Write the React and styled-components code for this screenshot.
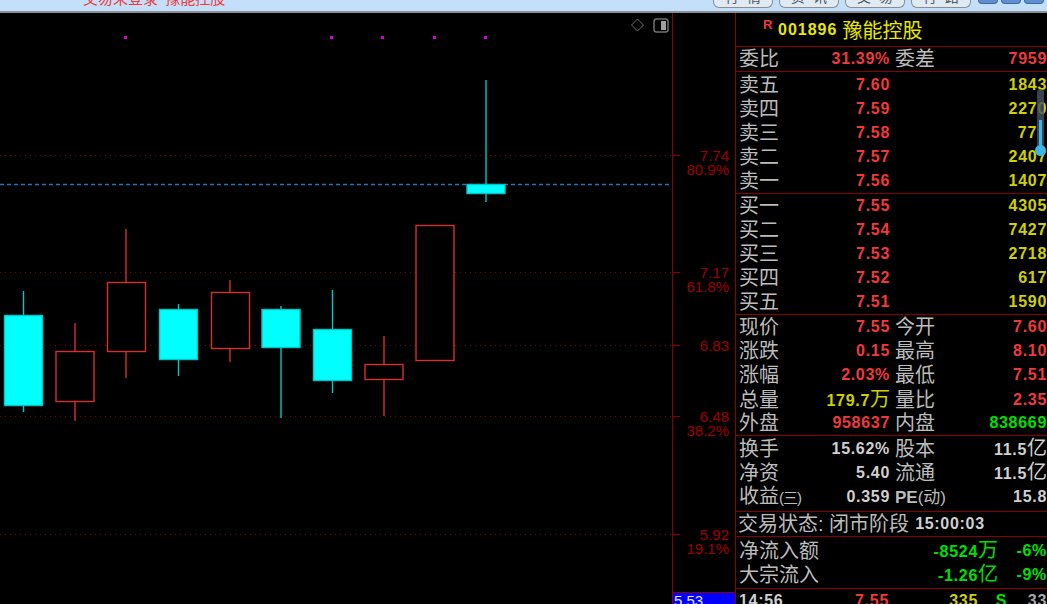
import React from 'react';
import styled, { createGlobalStyle } from 'styled-components';

const GlobalStyle = createGlobalStyle`
  html, body { margin: 0; padding: 0; background: #000; overflow: hidden; }
  body { font-family: "Liberation Sans", "Noto Sans CJK SC", sans-serif; }
`;

const candles = [
  { mid: 23.5, left: 4.5, top: 291, bottom: 412, y1: 315, y2: 405, up: false },
  { mid: 75, left: 56, top: 323, bottom: 421, y1: 351, y2: 401, up: true },
  { mid: 126, left: 107.5, top: 229, bottom: 378, y1: 282, y2: 351, up: true },
  { mid: 178.5, left: 159.5, top: 304, bottom: 376, y1: 309, y2: 359, up: false },
  { mid: 230, left: 211.5, top: 280, bottom: 362, y1: 292, y2: 348, up: true },
  { mid: 281, left: 262, top: 306, bottom: 418, y1: 309, y2: 347, up: false },
  { mid: 332.5, left: 313.5, top: 290, bottom: 393, y1: 329, y2: 380, up: false },
  { mid: 384, left: 365, top: 336, bottom: 416, y1: 364, y2: 379, up: true },
  { mid: 435, left: 416, top: 225, bottom: 360, y1: 225, y2: 360, up: true },
  { mid: 486, left: 467, top: 80, bottom: 202, y1: 184, y2: 193, up: false },
];

const gridLines = [155, 272, 345, 416, 534];
const marks = [125.5, 331.5, 382.5, 434.5, 485.5];

const axisLabels = [
  { top: 149, price: '7.74', pct: '80.9%' },
  { top: 266, price: '7.17', pct: '61.8%' },
  { top: 339, price: '6.83' },
  { top: 410, price: '6.48', pct: '38.2%' },
  { top: 528, price: '5.92', pct: '19.1%' },
];

const asks = [
  ['卖五', '7.60', '1843'],
  ['卖四', '7.59', '2270'],
  ['卖三', '7.58', '77', 10],
  ['卖二', '7.57', '2407'],
  ['卖一', '7.56', '1407'],
];
const bids = [
  ['买一', '7.55', '4305'],
  ['买二', '7.54', '7427'],
  ['买三', '7.53', '2718'],
  ['买四', '7.52', '617'],
  ['买五', '7.51', '1590'],
];

const Page = styled.div`
  width: 1047px;
  height: 604px;
  display: flex;
  flex-direction: column;
  overflow: hidden;
  background: #000;
`;

const TopBar = styled.div`
  height: 11px;
  flex: none;
  display: flex;
  justify-content: space-between;
  align-items: flex-start;
  background: #c3dffa;
  border-bottom: 2px solid #8b9097;
  overflow: hidden;
`;

const Notice = styled.div`
  margin: -9px 0 0 83px;
  font-size: 15px;
  line-height: 15px;
  word-spacing: 3px;
  color: #f03a3a;
  white-space: nowrap;
`;

const TopTabs = styled.div`
  display: flex;
  align-items: flex-start;
  gap: 6px;
  margin-right: 3px;
`;

const TopTab = styled.div`
  width: 60px;
  height: 8px;
  box-sizing: border-box;
  border: 1px solid #8d8d8d;
  border-top: none;
  border-radius: 0 0 6px 6px;
  background: #dfeaf5;
  overflow: hidden;
`;

const TabText = styled.div`
  margin-top: -10px;
  color: #555;
  font-size: 14px;
  line-height: 14px;
  letter-spacing: 8px;
  text-align: center;
  padding-left: 8px;
`;

const TopKeys = styled.div`
  display: flex;
  gap: 3px;
  margin-left: 1px;
`;

const TopKey = styled.div`
  width: 20px;
  height: 4px;
  box-sizing: border-box;
  background: #5f8fd0;
  border: 1px solid #3f6aa8;
  border-top: none;
  border-radius: 0 0 5px 5px;
`;

const Body = styled.div`
  flex: 1;
  display: flex;
  min-height: 0;
`;

const Chart = styled.div`
  position: relative;
  width: 736px;
  flex: none;
  border-right: 1px solid #8a0000;
  box-sizing: border-box;
`;

const ChartSvg = styled.svg`
  position: absolute;
  left: 0;
  top: -13px;
`;

const AxisLabel = styled.div`
  position: absolute;
  top: ${(p) => p.$top - 13}px;
  right: 6px;
  width: 50px;
  text-align: right;
  font-size: 15px;
  line-height: 14px;
  color: #a00000;
`;

const AxisPrice = styled.div`
  height: 14px;
`;

const CursorTag = styled.div`
  position: absolute;
  left: 673px;
  right: 0;
  bottom: 0;
  height: 11px;
  padding-left: 1px;
  background: #0000ff;
  border-top: 1px solid #8a0000;
  color: #e4e4ff;
  font-size: 15px;
  line-height: 15px;
  overflow: hidden;
`;

const Panel = styled.div`
  position: relative;
  flex: 1;
  min-width: 0;
  overflow: hidden;
  color: #bcbcbc;
  font-size: 20px;
`;

const Title = styled.div`
  height: 33px;
  display: flex;
  align-items: center;
  padding-left: 27px;
  color: #e8e800;
  border-bottom: 1px solid #8a0000;
`;

const TitleMark = styled.span`
  align-self: flex-start;
  margin-top: 5px;
  width: 15px;
  color: #f03a3a;
  font-size: 13px;
  font-weight: 700;
  line-height: 14px;
`;

const TitleCode = styled.span`
  font-size: 16px;
  font-weight: 700;
  letter-spacing: 1px;
`;

const TitleName = styled.span`
  margin-left: 5px;
  font-size: 20px;
`;

const Section = styled.div`
  border-bottom: 1px solid #8a0000;
  padding: ${(p) => p.$pad || '0'};
`;

const QuoteRow = styled.div`
  display: grid;
  grid-template-columns: 42px 109px 44px 1fr;
  height: 24px;
  align-items: center;
  padding-left: 3px;
`;

const BookRow = styled.div`
  display: grid;
  grid-template-columns: 42px 109px 1fr;
  height: 24px;
  align-items: center;
  padding-left: 3px;
`;

const Label = styled.span`
  font-size: 20px;
  line-height: 24px;
  color: #bcbcbc;
  white-space: nowrap;
  margin-left: ${(p) => p.$ml || 0}px;
`;

const Tight = styled.span`
  font-size: 15px;
  letter-spacing: -1px;
`;

const PeLabel = styled.span`
  font-size: 17px;
  font-weight: ${(p) => (p.$bold ? 700 : 400)};
`;

const Num = styled.span`
  text-align: ${(p) => (p.$left ? 'left' : 'right')};
  padding-right: ${(p) => p.$pr || 0}px;
  font-size: 16px;
  font-weight: 700;
  letter-spacing: 0.7px;
  line-height: 24px;
  white-space: nowrap;
  color: ${(p) => p.$c || '#f03a3a'};
`;

const Cjk = styled.span`
  font-size: 20px;
  font-weight: 400;
  letter-spacing: 0;
`;

const StatusRow = styled.div`
  height: 24px;
  display: flex;
  align-items: center;
  padding-left: 2px;
  gap: 6px;
  border-bottom: 1px solid #8a0000;
`;

const FlowRow = styled.div`
  display: grid;
  grid-template-columns: 100px 159px 1fr;
  height: 24px;
  align-items: center;
  padding-left: 3px;
`;

const TickRow = styled.div`
  display: grid;
  grid-template-columns: 70px 80px 89px 29px 1fr;
  height: 24px;
  align-items: center;
  padding-left: 3px;
`;

const Slider = styled.div`
  position: absolute;
  right: 3px;
  top: 76px;
  width: 7px;
  height: 63px;
  border-radius: 4px;
  background: rgba(70, 85, 100, 0.8);
`;

const SliderFill = styled.div`
  position: absolute;
  left: 2px;
  top: 31px;
  bottom: 3px;
  width: 3px;
  background: #38b6e8;
`;

const SliderKnob = styled.div`
  position: absolute;
  left: -2px;
  bottom: -4px;
  width: 11px;
  height: 11px;
  border-radius: 50%;
  background: #38b6e8;
`;

const G = '#00e000';
const Y = '#d0d000';
const W = '#d0d0d0';

function QuoteLine({ a, b, c, d, cb, cd }) {
  return (
    <QuoteRow>
      <Label>{a}</Label>
      <Num $c={cb}>{b}</Num>
      <Label $ml={5}>{c}</Label>
      <Num $c={cd}>{d}</Num>
    </QuoteRow>
  );
}

function BookLine({ row }) {
  return (
    <BookRow>
      <Label>{row[0]}</Label>
      <Num>{row[1]}</Num>
      <Num $c={Y} $pr={row[3]}>{row[2]}</Num>
    </BookRow>
  );
}

export default function App() {
  return (
    <Page>
      <GlobalStyle />
      <TopBar>
        <Notice>交易未登录 豫能控股</Notice>
        <TopTabs>
          <TopTab><TabText>行情</TabText></TopTab>
          <TopTab><TabText>资讯</TabText></TopTab>
          <TopTab><TabText>交易</TabText></TopTab>
          <TopTab><TabText>行路</TabText></TopTab>
          <TopKeys>
            <TopKey />
            <TopKey />
            <TopKey />
          </TopKeys>
        </TopTabs>
      </TopBar>
      <Body>
        <Chart>
          <ChartSvg width="735" height="604" viewBox="0 0 735 604">
            {gridLines.map((y) => (
              <g key={y}>
                <line x1="0" x2="673" y1={y + 0.5} y2={y + 0.5} stroke="#8a0000" strokeDasharray="1 4" />
                <line x1="673" x2="680" y1={y + 0.5} y2={y + 0.5} stroke="#8a0000" />
              </g>
            ))}
            <line x1="0" x2="673" y1="184.5" y2="184.5" stroke="#2a73b8" strokeWidth="1.3" strokeDasharray="4 3" />
            <line x1="672.5" x2="672.5" y1="13" y2="604" stroke="#8a0000" />
            {marks.map((x) => (
              <rect key={x} x={x - 1.5} y="36" width="3" height="3" fill="#d800d8" />
            ))}
            {candles.map((c) => {
              const col = c.up ? '#d43030' : '#00c8c8';
              return (
                <g key={c.mid}>
                  <line x1={c.mid} x2={c.mid} y1={c.top} y2={c.bottom} stroke={col} strokeWidth="1.4" />
                  <rect
                    x={c.left}
                    y={c.y1 + 0.5}
                    width="38"
                    height={c.y2 - c.y1}
                    fill={c.up ? '#000' : '#00ffff'}
                    stroke={col}
                    strokeWidth="1.4"
                  />
                </g>
              );
            })}
            <path d="M637.5 19l6 6-6 6-6-6z" fill="none" stroke="#707070" />
            <rect x="654" y="19" width="14" height="13" rx="2.5" fill="none" stroke="#707070" strokeWidth="1.5" />
            <rect x="661" y="21" width="5" height="9" fill="#a0a0a0" />
          </ChartSvg>
          {axisLabels.map((l) => (
            <AxisLabel key={l.top} $top={l.top}>
              <AxisPrice>{l.price}</AxisPrice>
              {l.pct && <div>{l.pct}</div>}
            </AxisLabel>
          ))}
          <CursorTag>5.53</CursorTag>
        </Chart>
        <Panel>
          <Title>
            <TitleMark>R</TitleMark>
            <TitleCode>001896</TitleCode>
            <TitleName>豫能控股</TitleName>
          </Title>
          <Section>
            <QuoteLine a="委比" b="31.39%" c="委差" d="7959" />
          </Section>
          <Section $pad="1px 0 0">
            {asks.map((r) => <BookLine key={r[0]} row={r} />)}
          </Section>
          <Section>
            {bids.map((r) => <BookLine key={r[0]} row={r} />)}
          </Section>
          <Section>
            <QuoteLine a="现价" b="7.55" c="今开" d="7.60" />
            <QuoteLine a="涨跌" b="0.15" c="最高" d="8.10" />
            <QuoteLine a="涨幅" b="2.03%" c="最低" d="7.51" />
            <QuoteLine a="总量" b={<>179.7<Cjk>万</Cjk></>} cb={Y} c="量比" d="2.35" />
            <QuoteLine a="外盘" b="958637" c="内盘" d="838669" cd={G} />
          </Section>
          <Section $pad="0 0 3px">
            <QuoteLine a="换手" b="15.62%" cb={W} c="股本" d={<>11.5<Cjk>亿</Cjk></>} cd={W} />
            <QuoteLine a="净资" b="5.40" cb={W} c="流通" d={<>11.5<Cjk>亿</Cjk></>} cd={W} />
            <QuoteLine
              a={<>收益<Tight>(三)</Tight></>}
              b="0.359"
              cb={W}
              c={<><PeLabel $bold>PE</PeLabel><PeLabel>(动)</PeLabel></>}
              d="15.8"
              cd={W}
            />
          </Section>
          <StatusRow>
            <Label>交易状态: 闭市阶段</Label>
            <Num $c={W}>15:00:03</Num>
          </StatusRow>
          <Section $pad="1px 0 2px">
            <FlowRow>
              <Label>净流入额</Label>
              <Num $c={G}>-8524<Cjk>万</Cjk></Num>
              <Num $c={G}>-6%</Num>
            </FlowRow>
            <FlowRow>
              <Label>大宗流入</Label>
              <Num $c={G}>-1.26<Cjk>亿</Cjk></Num>
              <Num $c={G}>-9%</Num>
            </FlowRow>
          </Section>
          <TickRow>
            <Num $c={W} $left>14:56</Num>
            <Num>7.55</Num>
            <Num $c={Y}>335</Num>
            <Num $c={G}>S</Num>
            <Num $c="#a8a8a8">33</Num>
          </TickRow>
          <Slider>
            <SliderFill />
            <SliderKnob />
          </Slider>
        </Panel>
      </Body>
    </Page>
  );
}
